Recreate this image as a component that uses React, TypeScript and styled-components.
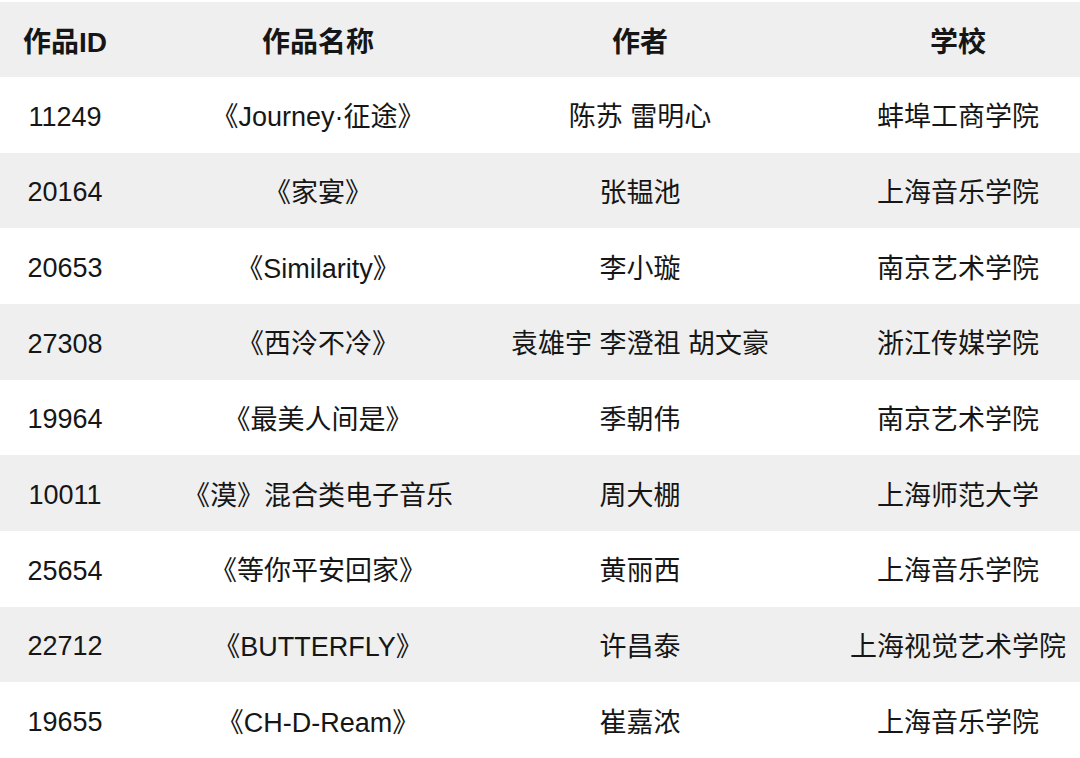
import React from "react";
import styled, { createGlobalStyle } from "styled-components";

const Global = createGlobalStyle`
  html, body { margin: 0; padding: 0; background: #ffffff; overflow: hidden; }
  body { font-family: "Liberation Sans", "Noto Sans CJK SC", sans-serif; color: #161616; }
`;

const Table = styled.div`
  width: 1080px;
  height: 758px;
  padding-top: 2px;
  box-sizing: border-box;
  display: flex;
  flex-direction: column;
`;

const Row = styled.div<{ $shade: boolean; $head?: boolean }>`
  display: grid;
  grid-template-columns: 130px 376px 268px 306px;
  align-items: center;
  height: ${(p) => (p.$head ? "75px" : "75.67px")};
  background: ${(p) => (p.$shade ? "#efefef" : "#ffffff")};
  font-size: ${(p) => (p.$head ? "28px" : "27px")};
  font-weight: ${(p) => (p.$head ? 700 : 400)};
`;

const Cell = styled.div<{ $shift?: number }>`
  text-align: center;
  white-space: nowrap;
  padding-left: ${(p) => (p.$shift ? `${p.$shift}px` : "0")};
`;

const IdCell = styled(Cell)`
  padding-top: 5px;
`;

const rows: [string, string, string, string][] = [
  ["11249", "《Journey·征途》", "陈苏 雷明心", "蚌埠工商学院"],
  ["20164", "《家宴》", "张韫池", "上海音乐学院"],
  ["20653", "《Similarity》", "李小璇", "南京艺术学院"],
  ["27308", "《西泠不冷》", "袁雄宇 李澄祖 胡文豪", "浙江传媒学院"],
  ["19964", "《最美人间是》", "季朝伟", "南京艺术学院"],
  ["10011", "《漠》混合类电子音乐", "周大棚", "上海师范大学"],
  ["25654", "《等你平安回家》", "黄丽西", "上海音乐学院"],
  ["22712", "《BUTTERFLY》", "许昌泰", "上海视觉艺术学院"],
  ["19655", "《CH-D-Ream》", "崔嘉浓", "上海音乐学院"],
];

export default function App() {
  return (
    <>
      <Global />
      <Table>
        <Row $shade $head>
          <Cell>作品ID</Cell>
          <Cell>作品名称</Cell>
          <Cell>作者</Cell>
          <Cell $shift={62}>学校</Cell>
        </Row>
        {rows.map((r, i) => (
          <Row key={r[0]} $shade={i % 2 === 1}>
            <IdCell>{r[0]}</IdCell>
            <Cell>{r[1]}</Cell>
            <Cell>{r[2]}</Cell>
            <Cell $shift={62}>{r[3]}</Cell>
          </Row>
        ))}
      </Table>
    </>
  );
}
